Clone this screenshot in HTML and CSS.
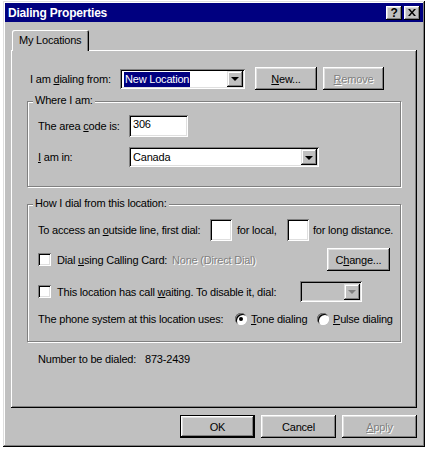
FILE: index.html
```html
<!DOCTYPE html>
<html lang="en">
<head>
  <meta charset="UTF-8" />
  <title>Dialing Properties</title>
  <link rel="stylesheet" href="styles.css">
</head>
<body>

<div class="window">
  <div class="titlebar">
    <span class="title">Dialing Properties</span>
    <div class="title-btns">
      <button class="tbtn help">?</button>
      <button class="tbtn close">
        <svg width="8" height="7" viewBox="0 0 8 7"><path d="M0 0h2l2 2.5L6 0h2L5 3.5 8 7H6L4 4.5 2 7H0l3-3.5z" fill="#000"/></svg>
      </button>
    </div>
  </div>

  <div class="tabs">
    <div class="tab">My Locations</div>
  </div>

  <div class="panel">
    <div class="row from-row">
      <label class="lbl lbl-from">I am <u>d</u>ialing from:</label>
      <div class="combo combo-from">
        <span class="combo-text"><span class="selected">New Location</span></span>
        <span class="drop"><i class="arrow"></i></span>
      </div>
      <button class="btn btn-new"><u>N</u>ew...</button>
      <button class="btn btn-remove disabled"><u>R</u>emove</button>
    </div>

    <div class="group group-where">
      <span class="group-title">Where I am:</span>
      <div class="row area-row">
        <label class="lbl lbl-where">The area <u>c</u>ode is:</label>
        <div class="field field-area">306</div>
      </div>
      <div class="row country-row">
        <label class="lbl lbl-where"><u>I</u> am in:</label>
        <div class="combo combo-country">
          <span class="combo-text">Canada</span>
          <span class="drop"><i class="arrow"></i></span>
        </div>
      </div>
    </div>

    <div class="group group-how">
      <span class="group-title">How I dial from this location:</span>
      <div class="row access-row">
        <label class="lbl lbl-access">To access an <u>o</u>utside line, first dial:</label>
        <div class="field field-small"></div>
        <span class="for-local">for local,</span>
        <div class="field field-small"></div>
        <span class="for-long">for long distance.</span>
      </div>
      <div class="row card-row">
        <span class="check"></span>
        <label class="check-lbl lbl-card">Dial <u>u</u>sing Calling Card:</label>
        <span class="muted">None (Direct Dial)</span>
        <button class="btn btn-change">C<u>h</u>ange...</button>
      </div>
      <div class="row wait-row">
        <span class="check"></span>
        <label class="check-lbl lbl-wait">This location has call <u>w</u>aiting. To disable it, dial:</label>
        <div class="combo combo-wait off">
          <span class="combo-text"></span>
          <span class="drop"><i class="arrow"></i></span>
        </div>
      </div>
      <div class="row phone-row">
        <span class="lbl-phone">The phone system at this location uses:</span>
        <span class="radio on"></span>
        <label class="radio-lbl lbl-tone"><u>T</u>one dialing</label>
        <span class="radio"></span>
        <label class="radio-lbl"><u>P</u>ulse dialing</label>
      </div>
    </div>

    <div class="row number-row">
      <span class="lbl-number">Number to be dialed:</span>
      <span>873-2439</span>
    </div>
  </div>

  <div class="actions">
    <button class="btn btn-action default">OK</button>
    <button class="btn btn-action">Cancel</button>
    <button class="btn btn-action disabled"><u>A</u>pply</button>
  </div>
</div>

</body>
</html>
```

FILE: styles.css
```css
* {
  box-sizing: border-box;
}

body {
  margin: 0;
  padding: 0;
  width: 427px;
  height: 450px;
  overflow: hidden;
  background: #fff;
  font-family: "Liberation Sans", Arial, sans-serif;
  font-size: 11px;
  letter-spacing: -0.2px;
  white-space: nowrap;
  color: #000;
}

button {
  font-family: inherit;
  font-size: 11px;
  letter-spacing: -0.2px;
  color: #000;
  padding: 0;
  border: none;
}

u {
  text-decoration: underline;
  text-underline-offset: 1px;
}

/* window frame */
.window {
  margin: 1px 0 0 3px;
  width: 422px;
  height: 446px;
  padding: 2px;
  background: #c0c0c0;
  box-shadow: inset -1px -1px #000, inset 1px 1px #dfdfdf, inset -2px -2px #808080, inset 2px 2px #fff;
}

.titlebar {
  height: 19px;
  background: #000080;
  display: flex;
  align-items: center;
  justify-content: space-between;
  padding: 0 3px 0 3px;
}

.title {
  color: #fff;
  font-weight: bold;
  font-size: 12px;
  letter-spacing: -0.2px;
}

.title-btns {
  display: flex;
  gap: 2px;
}

.tbtn {
  width: 16px;
  height: 14px;
  background: #c0c0c0;
  display: flex;
  align-items: center;
  justify-content: center;
  box-shadow: inset -1px -1px #000, inset 1px 1px #fff, inset -2px -2px #808080, inset 2px 2px #dfdfdf;
}

.tbtn.help {
  font-weight: bold;
  font-size: 12px;
  line-height: 14px;
}

/* tab */
.tabs {
  display: flex;
  margin-top: 8px;
  padding-left: 7px;
}

.tab {
  position: relative;
  z-index: 1;
  width: 77px;
  height: 21px;
  margin-bottom: -1px;
  padding: 4px 0 0 7px;
  background: #c0c0c0;
  border-radius: 2px 2px 0 0;
  box-shadow: inset 1px 1px #fff, inset -1px 0 #000, inset -2px 0 #808080;
}

.panel {
  margin: 0 6px;
  height: 358px;
  box-shadow: inset -1px -1px #000, inset 1px 1px #fff, inset -2px -2px #808080;
  padding-top: 17px;
}

.row {
  display: flex;
  align-items: center;
}

.row > * {
  flex-shrink: 0;
}

/* controls */
.btn {
  height: 23px;
  background: #c0c0c0;
  box-shadow: inset -1px -1px #000, inset 1px 1px #fff, inset -2px -2px #808080, inset 2px 2px #dfdfdf;
}

.btn.disabled,
.muted {
  color: #808080;
  text-shadow: 1px 1px #fff;
}

.field {
  background: #fff;
  box-shadow: inset 1px 1px #808080, inset -1px -1px #fff, inset 2px 2px #000, inset -2px -2px #dfdfdf;
  padding: 4px 0 0 4px;
}

.combo {
  height: 20px;
  display: flex;
  align-items: center;
  background: #fff;
  padding: 2px;
  box-shadow: inset 1px 1px #808080, inset -1px -1px #fff, inset 2px 2px #000, inset -2px -2px #dfdfdf;
}

.combo-text {
  flex: 1;
  padding-left: 2px;
}

.selected {
  background: #000080;
  color: #fff;
  padding: 1px 1px 2px 1px;
}

.drop {
  width: 16px;
  height: 16px;
  background: #c0c0c0;
  display: flex;
  align-items: center;
  justify-content: center;
  box-shadow: inset -1px -1px #000, inset 1px 1px #dfdfdf, inset -2px -2px #808080, inset 2px 2px #fff;
}

.arrow {
  width: 0;
  height: 0;
  border-left: 4px solid transparent;
  border-right: 4px solid transparent;
  border-top: 4px solid #000;
  margin-top: 1px;
}

.combo.off {
  background: #c0c0c0;
}

.combo.off .arrow {
  border-top-color: #808080;
}

.check {
  width: 13px;
  height: 13px;
  background: #fff;
  box-shadow: inset 1px 1px #808080, inset -1px -1px #fff, inset 2px 2px #000, inset -2px -2px #dfdfdf;
}

.check-lbl {
  margin-left: 6px;
}

.radio {
  width: 12px;
  height: 12px;
  border-radius: 50%;
  background: #fff;
  position: relative;
  box-shadow: inset 1px 1px #808080, inset -1px -1px #fff, inset 2px 2px #000;
}

.radio.on::after {
  content: "";
  position: absolute;
  left: 4px;
  top: 4px;
  width: 4px;
  height: 4px;
  border-radius: 50%;
  background: #000;
}

.radio-lbl {
  margin-left: 4px;
}

/* top row */
.from-row {
  height: 23px;
  padding-left: 19px;
}

.lbl-from {
  width: 90px;
}

.combo-from {
  width: 125px;
}

.btn-new {
  width: 62px;
  margin-left: 10px;
}

.btn-remove {
  width: 61px;
  margin-left: 6px;
}

/* group boxes */
.group {
  position: relative;
  margin-left: 16px;
  width: 374px;
  border: 1px solid #808080;
  box-shadow: inset 1px 1px #fff, 1px 1px #fff;
  padding: 0 10px 0 10px;
}

.group-title {
  position: absolute;
  top: -8px;
  left: 5px;
  padding: 0 2px;
  background: #c0c0c0;
}

.group-where {
  margin-top: 11px;
  height: 86px;
  padding-top: 13px;
}

.lbl-where {
  width: 91px;
}

.area-row {
  height: 22px;
}

.field-area {
  width: 59px;
  height: 22px;
  padding-top: 3px;
}

.country-row {
  margin-top: 10px;
  height: 20px;
}

.combo-country {
  width: 190px;
}

.group-how {
  margin-top: 17px;
  height: 138px;
  padding-top: 14px;
}

.access-row {
  height: 22px;
}

.lbl-access {
  width: 172px;
}

.field-small {
  width: 22px;
  height: 22px;
}

.for-local {
  width: 55px;
  padding-left: 5px;
}

.for-long {
  padding-left: 4px;
}

.card-row {
  margin-top: 7px;
  height: 23px;
}

.lbl-card {
  width: 115px;
}

.btn-change {
  width: 63px;
  margin-left: auto;
}

.wait-row {
  margin-top: 10px;
  height: 21px;
}

.lbl-wait {
  width: 243px;
}

.combo-wait {
  width: 62px;
  height: 21px;
}

.phone-row {
  margin-top: 9px;
  height: 16px;
}

.lbl-phone {
  width: 197px;
}

.lbl-tone {
  width: 66px;
}

.number-row {
  margin-top: 10px;
  height: 14px;
  padding-left: 27px;
}

.lbl-number {
  width: 107px;
}

/* dialog buttons */
.actions {
  display: flex;
  justify-content: flex-end;
  gap: 6px;
  margin-top: 7px;
  padding-right: 6px;
}

.btn-action {
  width: 75px;
}

.btn-action.default {
  box-shadow: inset 0 0 0 1px #000, inset -2px -2px #000, inset 2px 2px #fff, inset -3px -3px #808080, inset 3px 3px #dfdfdf;
}
```
